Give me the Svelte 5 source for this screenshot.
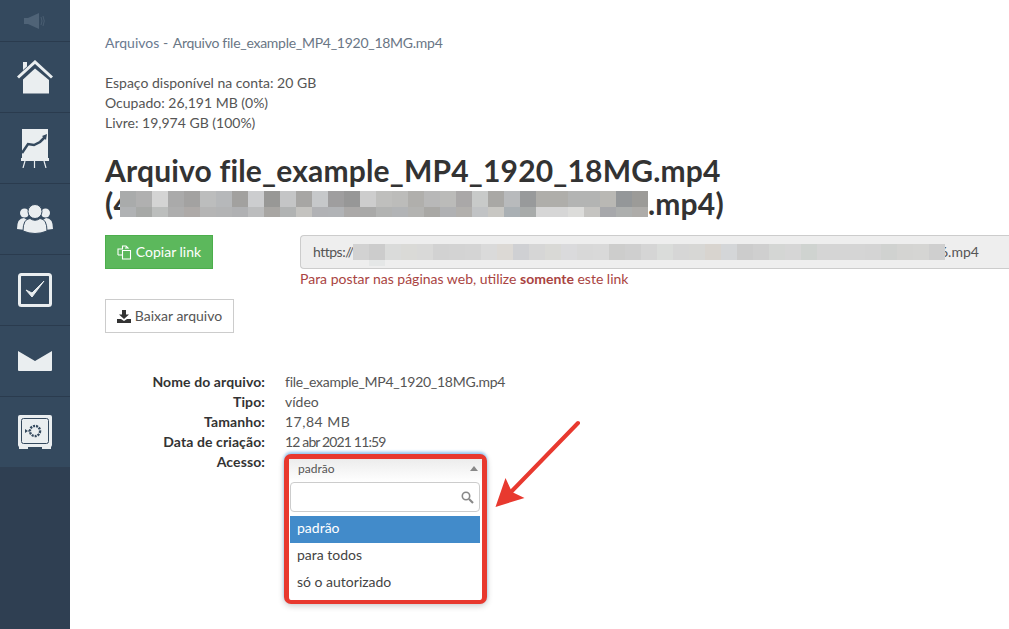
<script>
  const titleTop = ["#a9abab","#b0b0b0","#d4d4d4","#aaaaaa","#a3a2a1","#bcbdbd","#b6b8ba","#a2a19f","#cccdcf","#989896","#c4c5c6","#a7a6a4","#c6c8ca","#9f9e9f","#979797","#cdcdcd","#bfbfbd","#bcbcba","#b0afac","#b8b8b8","#bbbbb9","#aaa8a8","#c8cac9","#a9a8a5","#b8babc","#989a9b","#afaeaa","#afaeaa","#b3b4b3","#b3b4b3","#b9b8b4","#949799","#9c9b98"];
  const titleBot = ["#b0b2b4","#a7a9a7","#bcbebd","#aeaeae","#aeaaa8","#b5b5b5","#b3b4b5","#b0b1b3","#bcbdbe","#a8a6a3","#b1b3b3","#c4c3c0","#b1b2b5","#b1b3b6","#aba9a8","#a9a9a8","#b2b3b2","#b2b4b6","#b3b3b1","#a9a8a5","#b0b1b3","#b2b0ad","#c1c3c5","#c8c7c3","#aab0b4","#a8abaa","#d6d6d6","#d6d6d6","#dcdcda","#c5c4c1","#a7a8ab","#adafae","#aeaca9"];
  const urlCells = ["#d2d2d2","#cccccc","#dadbda","#dadad7","#d9d9d8","#d2d2d2","#d3d3d3","#d4d4d4","#dadada","#dcd9d5","#cfd0d3","#d6d6d6","#d9d9d6","#dadadc","#d8d8d8","#d9d9d9","#cdcdcc","#cfcfcf","#d5d5d5","#dadcda","#d6d6d6","#d7d7d5","#d8d4cf","#d4d6d8","#cccccc","#cfcfcf","#d4d6d4","#d6d6d6","#cfd3d0","#d5d5d5","#d5d5d5","#d5d5d5","#d4d4d4","#d0d2d0","#d4d4d2","#d5d5d3","#cfcfcf"];
  const details = [
    ["Nome do arquivo:", "file_example_MP4_1920_18MG.mp4", "name"],
    ["Tipo:", "vídeo", ""],
    ["Tamanho:", "17,84 MB", "wide"],
    ["Data de criação:", "12 abr 2021 11:59", "tight"]
  ];
</script>

<div class="page">
  <nav class="sidebar">
    <div class="nav-group">
      <div class="nav-item speaker">
        <svg width="22" height="16" viewBox="0 0 22 16">
          <rect x="0" y="5" width="4" height="6" fill="#4f6377"/>
          <path d="M4 5 L15 0 V16 L4 11 Z" fill="#4f6377"/>
          <path d="M17 4 Q19 8 17 12 M19 3 Q21.500 8 19 13" fill="none" stroke="#4a5e72" stroke-width="1"/>
        </svg>
      </div>
      <div class="nav-item">
        <svg width="36" height="34" viewBox="0 0 36 34">
          <path d="M6 2 H10 V6.500 L6 10 Z" fill="#eaeef0"/>
          <path d="M1 17.500 L18 2 L35 17.500" fill="none" stroke="#eaeef0" stroke-width="3"/>
          <path d="M6 19.500 L18 8.500 L32 20 V33.500 H6 Z" fill="#eaeef0"/>
        </svg>
      </div>
      <div class="nav-item">
        <svg width="30" height="39" viewBox="0 0 30 39">
          <rect x="2" y="0" width="26" height="29" fill="#eaeef0"/>
          <path d="M2 24 L8 15 L14 16 L20 13 L25 8" fill="none" stroke="#34495e" stroke-width="2.500"/>
          <path d="M22 7 L27 5 L26 11 Z" fill="#34495e"/>
          <rect x="1" y="29" width="28" height="3" fill="#eaeef0"/>
          <path d="M5 32 L3 39 M14.500 32 V39 M24 32 L26 39" stroke="#eaeef0" stroke-width="1.200"/>
        </svg>
      </div>
      <div class="nav-item">
        <svg width="36" height="30" viewBox="0 0 36 30">
          <circle cx="7.500" cy="9" r="4.500" fill="#eaeef0"/>
          <circle cx="28.500" cy="9" r="4.500" fill="#eaeef0"/>
          <path d="M0 25 Q0 14 7 14 L10 16 L8 26 Z M36 25 Q36 14 29 14 L26 16 L28 26 Z" fill="#eaeef0"/>
          <circle cx="18" cy="7.500" r="7" fill="#eaeef0" stroke="#34495e"/>
          <path d="M6 27 Q6 15 13 14.500 Q18 18 23 14.500 Q30 15 30 27 Q18 32 6 27 Z" fill="#eaeef0" stroke="#34495e"/>
        </svg>
      </div>
      <div class="nav-item">
        <svg width="34" height="34" viewBox="0 0 34 34">
          <rect x="1.500" y="1.500" width="31" height="31" rx="2" fill="#34495e" stroke="#eaeef0" stroke-width="3"/>
          <path d="M8 17 L14 24 L26 8 L14 20 Z" fill="#eaeef0" stroke="#eaeef0" stroke-linejoin="round"/>
        </svg>
      </div>
      <div class="nav-item">
        <svg width="34" height="20" viewBox="0 0 34 20">
          <path d="M0 0 L17 10 L34 0 V19 Q34 20 33 20 H1 Q0 20 0 19 Z" fill="#eaeef0"/>
        </svg>
      </div>
      <div class="nav-item">
        <svg width="34" height="34" viewBox="0 0 34 34">
          <rect x="0" y="0" width="34" height="32" rx="2" fill="#eaeef0"/>
          <rect x="1" y="31" width="9" height="3" fill="#eaeef0"/>
          <rect x="24" y="31" width="9" height="3" fill="#eaeef0"/>
          <rect x="3.500" y="3.500" width="27" height="25" rx="2" fill="none" stroke="#34495e"/>
          <circle cx="17" cy="16" r="5" fill="none" stroke="#34495e" stroke-width="2.500" stroke-dasharray="2 1"/>
          <circle cx="17" cy="16" r="3.500" fill="#eaeef0"/>
          <path d="M7 14 L10 16 L7 18 Z" fill="#34495e"/>
          <path d="M10 16 H12" stroke="#34495e"/>
        </svg>
      </div>
    </div>
  </nav>

  <main class="content">
    <div class="breadcrumb"><a href="#top">Arquivos</a> <span class="sep">-</span> <span class="name">Arquivo file_example_MP4_1920_18MG.mp4</span></div>

    <div class="quota">
      <div>Espaço disponível na conta: 20 GB</div>
      <div>Ocupado: 26,191 MB (0%)</div>
      <div>Livre: 19,974 GB (100%)</div>
    </div>

    <h1>
      Arquivo file_example_MP4_1920_18MG.mp4<br />
      <span class="title-line">(4<span class="mosaic">
        <span class="mosaic-row top">{#each titleTop as c}<i style:background={c}></i>{/each}</span>
        <span class="mosaic-row bot">{#each titleBot as c}<i style:background={c}></i>{/each}</span>
      </span>.mp4)</span>
    </h1>

    <div class="link-row">
      <button class="btn green">
        <svg width="15" height="15" viewBox="0 0 15 15" fill="none" stroke="#fff" stroke-width="1.100">
          <path d="M5.500 4 V1 H9 L11 3 H8 M1 10 V4 H6 M1 10 H5"/>
          <path d="M5.500 5.500 H13.500 V14 H5.500 Z"/>
        </svg>
        Copiar link
      </button>
      <div class="url-col">
        <div class="url-box">
          <span class="scheme">https://</span>
          <span class="url-mosaic">{#each urlCells as c}<i style:background={c}></i>{/each}<b class="url-stray"></b></span>
          <span class="url-end">6.mp4</span>
        </div>
        <div class="hint">Para postar nas páginas web, utilize <b>somente</b> este link</div>
      </div>
    </div>

    <button class="btn outline">
      <svg width="14" height="13" viewBox="0 0 14 13" fill="#333">
        <path d="M5 0 H9 V4.500 H12 L7 9 L2 4.500 H5 Z"/>
        <path d="M0 9 H4 L7 11 L10 9 H14 V13 H0 Z"/>
      </svg>
      Baixar arquivo
    </button>

    <dl class="details">
      {#each details as [label, value, cls]}
        <dt>{label}</dt>
        <dd class={cls}>{value}</dd>
      {/each}
      <dt>Acesso:</dt>
      <dd class="access">
        <div class="select">
          <div class="select-head">
            <span>padrão</span>
            <span class="caret"></span>
          </div>
          <div class="select-search">
            <svg width="13" height="13" viewBox="0 0 13 13" fill="none" stroke="#888">
              <circle cx="5" cy="5" r="3.700" stroke-width="1.600"/>
              <path d="M8 8 L12 12" stroke-width="2.200"/>
            </svg>
          </div>
          <ul>
            <li class="active">padrão</li>
            <li>para todos</li>
            <li>só o autorizado</li>
          </ul>
        </div>
        <svg class="arrow" width="96" height="100" viewBox="0 0 96 100">
          <path d="M88 8 L20 78" stroke="#e8392f" stroke-width="4" stroke-linecap="round"/>
          <path d="M5.500 92 L15.500 63 L22 77 L34.500 83 Z" fill="#e8392f"/>
        </svg>
      </dd>
    </dl>
  </main>
</div>

<style>
  :global(body) {
    background: #fff;
    overflow: hidden;
  }
  .page {
    display: flex;
    height: 629px;
    font-family: Lato, "Open Sans", sans-serif;
    font-size: 14px;
    line-height: 20px;
    color: #555;
  }
  .sidebar {
    width: 70px;
    flex: none;
    background: #2f3f52;
  }
  .nav-group {
    background: #34495e;
    height: 467px;
  }
  .nav-item {
    height: 70px;
    border-bottom: 1px solid #2a3b4e;
    display: flex;
    align-items: center;
    justify-content: center;
  }
  .nav-item:last-child {
    border-bottom: none;
  }
  .nav-item.speaker {
    height: 41px;
  }
  .content {
    flex: 1;
    min-width: 0;
    padding: 33px 0 0 35px;
    overflow: hidden;
  }
  .breadcrumb {
    margin-bottom: 20px;
    white-space: nowrap;
    color: #6a7685;
  }
  .breadcrumb a {
    color: #6a7a90;
    text-decoration: none;
  }
  .sep {
    margin-right: 1px;
  }
  .name {
    letter-spacing: -0.27px;
  }
  .wide {
    letter-spacing: 0.5px;
  }
  .tight {
    letter-spacing: -0.85px;
  }
  .quota {
    margin-bottom: 21px;
  }
  h1 {
    margin: 0 0 15px;
    font-size: 30px;
    line-height: 33px;
    font-weight: 700;
    letter-spacing: 0.18px;
    color: #333;
    white-space: nowrap;
  }
  .title-line {
    display: flex;
    align-items: center;
  }
  .mosaic {
    display: flex;
    flex-direction: column;
    margin-left: -11px;
    width: 528px;
    flex: none;
  }
  .mosaic-row {
    display: flex;
  }
  .mosaic-row i {
    display: block;
    width: 16px;
    flex: none;
  }
  .mosaic-row.top i {
    height: 16px;
  }
  .mosaic-row.bot i {
    height: 10px;
  }
  .link-row {
    display: flex;
    gap: 87px;
  }
  .btn {
    display: inline-flex;
    align-items: center;
    justify-content: center;
    gap: 4px;
    height: 34px;
    padding: 0;
    font: inherit;
    white-space: nowrap;
    background: #fff;
    border: 1px solid #ccc;
    color: #555;
    flex: none;
  }
  .btn.green {
    width: 108px;
    background: #5cb85c;
    border-color: #4cae4c;
    color: #fff;
  }
  .btn.outline {
    width: 129px;
    margin-top: 10px;
  }
  .url-col {
    flex: 1;
    min-width: 0;
  }
  .url-box {
    height: 34px;
    box-sizing: border-box;
    display: flex;
    align-items: center;
    padding-left: 12px;
    background: #eee;
    border: 1px solid #ccc;
    border-right: none;
    border-radius: 4px 0 0 4px;
    white-space: nowrap;
    overflow: hidden;
  }
  .scheme {
    width: 40px;
    letter-spacing: -0.5px;
  }
  .url-mosaic {
    position: relative;
    display: flex;
    flex: none;
    z-index: 1;
  }
  .url-mosaic i {
    display: block;
    width: 16px;
    height: 16px;
    flex: none;
  }
  .url-stray {
    position: absolute;
    left: 16px;
    top: 16px;
    width: 16px;
    height: 6px;
    background: #e5e7e7;
  }
  .url-end {
    margin-left: -5px;
  }
  .hint {
    color: #a94442;
  }
  .details {
    display: grid;
    grid-template-columns: 160px 1fr;
    column-gap: 20px;
    margin: 39px 0 0;
  }
  dt {
    text-align: right;
    font-weight: 700;
    letter-spacing: 0.1px;
    color: #333;
  }
  dd {
    margin: 0;
  }
  .access {
    position: relative;
  }
  .select {
    width: 203px;
    height: 150px;
    box-sizing: border-box;
    border: 5px solid #e8392f;
    border-bottom-width: 4px;
    border-radius: 7px;
    background: #fff;
    margin: 2px 0 0 -1px;
    box-shadow: 0 -2px 3px rgba(82, 168, 236, 0.6), 0 2px 6px rgba(0, 0, 0, 0.2);
  }
  .select-head {
    display: flex;
    align-items: center;
    justify-content: space-between;
    height: 23px;
    padding: 0 4px 4px 9px;
    box-sizing: border-box;
    font-size: 12px;
    background: linear-gradient(#ececec, #fff);
  }
  .caret {
    border-left: 4px solid transparent;
    border-right: 4px solid transparent;
    border-bottom: 5px solid #888;
  }
  .select-search {
    height: 30px;
    margin: 0 2px 0 1px;
    box-sizing: border-box;
    border: 1px solid #ccc;
    border-radius: 4px;
    display: flex;
    align-items: center;
    justify-content: flex-end;
    padding-right: 5px;
  }
  ul {
    list-style: none;
    margin: 4px 2px 0 1px;
    padding: 0;
  }
  li {
    height: 27px;
    line-height: 23px;
    padding-left: 7px;
    color: #444;
  }
  li.active {
    background: #428bca;
    color: #fff;
  }
  .arrow {
    position: absolute;
    left: 205px;
    top: -37px;
  }
</style>
